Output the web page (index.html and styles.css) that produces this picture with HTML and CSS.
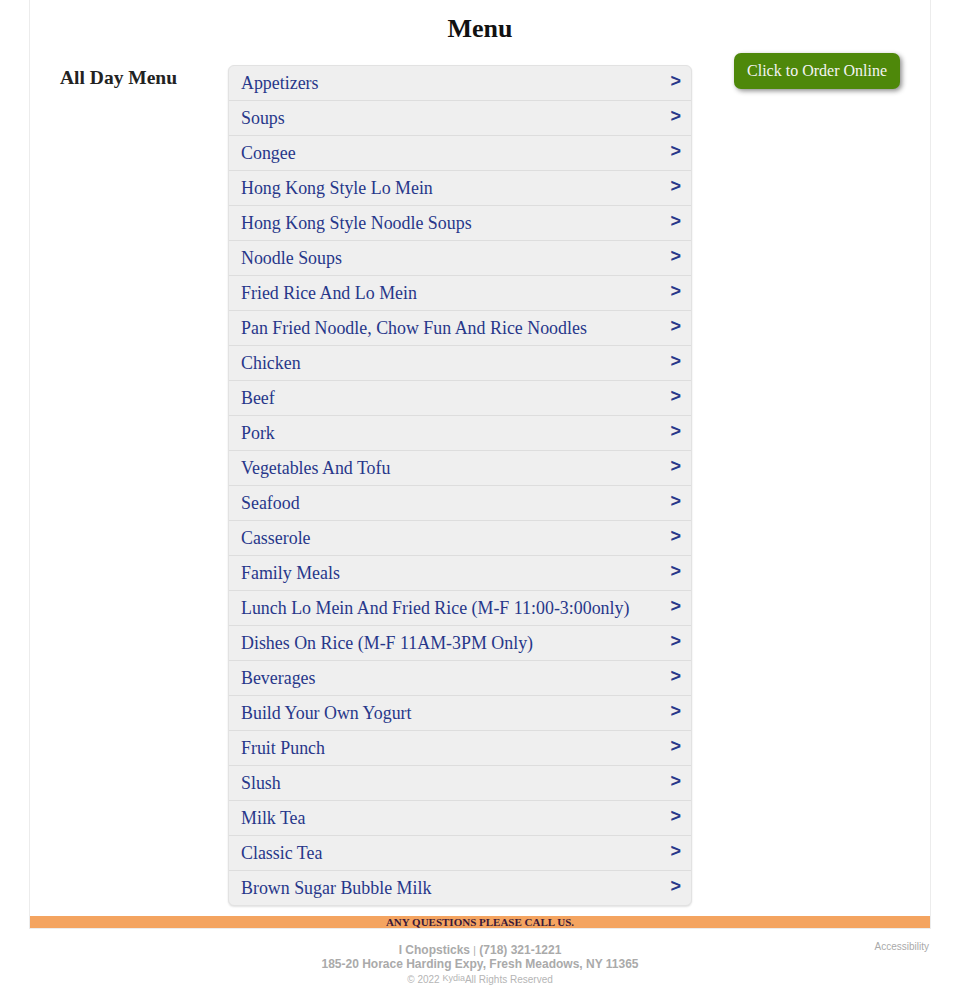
FILE: index.html
```html
<!DOCTYPE html>
<html lang="en">
<head>
    <meta charset="UTF-8">
    <meta name="viewport" content="width=device-width, initial-scale=1.0">
    <title>Menu - I Chopsticks</title>
    <link rel="stylesheet" href="styles.css">
</head>
<body>
    <div class="page">
        <h1 class="title">Menu</h1>

        <div class="menu-row">
            <div class="menu-name">All Day Menu</div>

            <ul class="categories">
                <li><a href="#">Appetizers</a><span class="arrow">&gt;</span></li>
                <li><a href="#">Soups</a><span class="arrow">&gt;</span></li>
                <li><a href="#">Congee</a><span class="arrow">&gt;</span></li>
                <li><a href="#">Hong Kong Style Lo Mein</a><span class="arrow">&gt;</span></li>
                <li><a href="#">Hong Kong Style Noodle Soups</a><span class="arrow">&gt;</span></li>
                <li><a href="#">Noodle Soups</a><span class="arrow">&gt;</span></li>
                <li><a href="#">Fried Rice And Lo Mein</a><span class="arrow">&gt;</span></li>
                <li><a href="#">Pan Fried Noodle, Chow Fun And Rice Noodles</a><span class="arrow">&gt;</span></li>
                <li><a href="#">Chicken</a><span class="arrow">&gt;</span></li>
                <li><a href="#">Beef</a><span class="arrow">&gt;</span></li>
                <li><a href="#">Pork</a><span class="arrow">&gt;</span></li>
                <li><a href="#">Vegetables And Tofu</a><span class="arrow">&gt;</span></li>
                <li><a href="#">Seafood</a><span class="arrow">&gt;</span></li>
                <li><a href="#">Casserole</a><span class="arrow">&gt;</span></li>
                <li><a href="#">Family Meals</a><span class="arrow">&gt;</span></li>
                <li><a href="#">Lunch Lo Mein And Fried Rice (M-F 11:00-3:00only)</a><span class="arrow">&gt;</span></li>
                <li><a href="#">Dishes On Rice (M-F 11AM-3PM Only)</a><span class="arrow">&gt;</span></li>
                <li><a href="#">Beverages</a><span class="arrow">&gt;</span></li>
                <li><a href="#">Build Your Own Yogurt</a><span class="arrow">&gt;</span></li>
                <li><a href="#">Fruit Punch</a><span class="arrow">&gt;</span></li>
                <li><a href="#">Slush</a><span class="arrow">&gt;</span></li>
                <li><a href="#">Milk Tea</a><span class="arrow">&gt;</span></li>
                <li><a href="#">Classic Tea</a><span class="arrow">&gt;</span></li>
                <li><a href="#">Brown Sugar Bubble Milk</a><span class="arrow">&gt;</span></li>
            </ul>

            <div class="order-col">
                <a class="order-btn" href="#">Click to Order Online</a>
            </div>
        </div>

        <div class="call-bar">ANY QUESTIONS PLEASE CALL US.</div>
    </div>

    <footer class="footer">
        <a class="access" href="#">Accessibility</a>
        <div class="contact"><b>I Chopsticks</b> <span class="sep">|</span> <b>(718) 321-1221</b></div>
        <div class="contact"><b>185-20 Horace Harding Expy, Fresh Meadows, NY 11365</b></div>
        <div class="copy">© 2022 <sup>Kydia</sup>All Rights Reserved</div>
    </footer>
</body>
</html>
```

FILE: styles.css
```css
body {
    margin: 0;
    font-family: 'Liberation Serif', 'Times New Roman', serif;
    background-color: #ffffff;
    color: #222222;
}

.page {
    margin: 0 29px;
    border: 1px solid #ececec;
    border-top: none;
}

.title {
    margin: 0;
    padding-top: 14px;
    font-size: 26px;
    line-height: 30px;
    text-align: center;
    color: #111111;
}

.menu-row {
    display: flex;
    align-items: flex-start;
    padding: 9px 30px 10px 30px;
}

.menu-name {
    width: 168px;
    flex-shrink: 0;
    padding-top: 14px;
    font-size: 19.5px;
    font-weight: bold;
    line-height: 22px;
    color: #222222;
}

.categories {
    list-style: none;
    margin: 12px 0 0 0;
    padding: 0;
    width: 462px;
    flex-shrink: 0;
    background-color: #efefef;
    border: 1px solid #e2e2e2;
    border-radius: 6px;
    box-shadow: 0 1px 2px rgba(0, 0, 0, 0.12);
}

.categories li {
    display: flex;
    justify-content: space-between;
    align-items: center;
    height: 34px;
    padding: 0 10px 0 12px;
    border-bottom: 1px solid #dddddd;
}

.categories li:last-child {
    border-bottom: none;
    height: 34px;
}

.categories a {
    font-size: 17.9px;
    color: #27378a;
    text-decoration: none;
}

.categories .arrow {
    font-family: 'Liberation Sans', Arial, sans-serif;
    font-weight: bold;
    font-size: 18px;
    color: #27378a;
    margin-top: -4px;
}

.order-col {
    flex: 1;
    display: flex;
    justify-content: flex-end;
}

.order-btn {
    display: block;
    padding: 8px 13px 8px 13px;
    background-color: #4e880a;
    color: #f4f4f4;
    font-size: 16px;
    line-height: 20px;
    text-decoration: none;
    border-radius: 7px;
    box-shadow: 2px 2px 5px rgba(0, 0, 0, 0.45);
}

.call-bar {
    background-color: #f4a460;
    color: #3a1838;
    font-size: 11px;
    font-weight: bold;
    text-align: center;
    line-height: 12px;
}

.footer {
    position: relative;
    padding-top: 14px;
    text-align: center;
    font-family: 'Liberation Sans', Arial, sans-serif;
    font-size: 12px;
    line-height: 14px;
    color: #aaaaaa;
}

.contact {
    font-size: 12px;
    line-height: 14px;
    height: 14px;
}

.contact .sep {
    font-size: 10px;
}

.copy {
    margin-top: 2px;
    font-size: 10px;
    line-height: 14px;
    height: 14px;
    color: #b5b5b5;
}

.copy sup {
    font-size: 9px;
    line-height: 0;
    vertical-align: 2px;
}

.access {
    position: absolute;
    top: 11px;
    right: 31px;
    font-size: 10px;
    color: #aaaaaa;
    text-decoration: none;
}
```
